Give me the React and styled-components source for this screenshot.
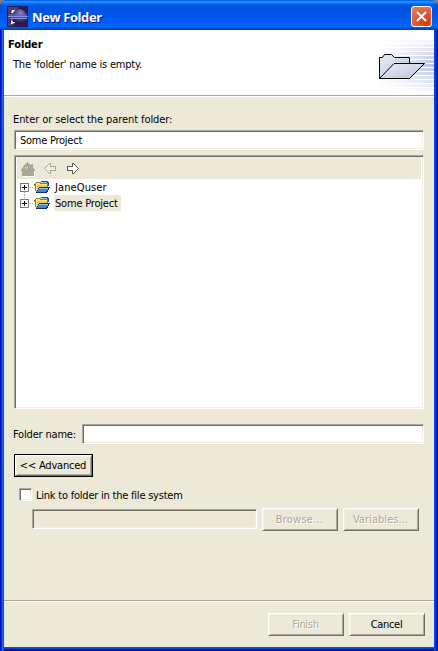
import React from "react";
import styled, { createGlobalStyle, css } from "styled-components";

const face = "#ece9d8";

const GlobalStyle = createGlobalStyle`
  * { box-sizing: border-box; }
  body { margin: 0; background: #808080; }
  svg { display: block; flex: none; }
`;

const Window = styled.div`
  width: 438px;
  height: 651px;
  display: flex;
  flex-direction: column;
  overflow: hidden;
  padding: 0 4px 4px;
  border-radius: 7px 7px 0 0;
  background: linear-gradient(90deg, #0010b8 0 1px, #0831d9 1px 2px, #166aee 2px 3px, #0855dd 3px 4px, transparent 4px 434px, #0048f1 434px 435px, #0036e0 435px 436px, #001ea0 436px 437px, #00138c 437px),
    linear-gradient(#0054e3 0 647px, #0855dd 647px 648px, #0441d8 648px 649px, #001ea0 649px 650px, #00138c 650px);
  font: 11px/13px "DejaVu Sans Condensed", "DejaVu Sans", sans-serif;
  font-stretch: condensed;
  color: #000;
`;

const TitleBar = styled.header`
  height: 30px;
  flex: none;
  display: flex;
  align-items: center;
  margin: 0 -4px;
  padding: 3px 6px 0 7px;
  background: linear-gradient(#0831d9 0, #0997ff 1px, #2a8fff 2px, #0068ee 4px, #0055e5 6px, #0054e3 12px, #005bf5 20px, #0066ff 25px, #0062f8 27px, #0045cc 29px, #0040b8 30px);
`;

const WindowTitle = styled.h1`
  flex: 1;
  margin: 1px 0 0 4px;
  font: bold 13px/18px "Open Sans", sans-serif;
  letter-spacing: ${(p) => p.$spacing}px;
  color: #fff;
  text-shadow: 1px 1px #0a1883;
`;

const CloseButton = styled.button`
  width: 21px;
  height: 21px;
  padding: 0;
  display: grid;
  place-items: center;
  border: 1px solid #fff;
  border-radius: 3px;
  background: radial-gradient(circle at 75% 85%, #d83a08, #e5603c 60%, #e98769);
`;

const Banner = styled.section`
  height: 67px;
  flex: none;
  display: flex;
  justify-content: space-between;
  background: #fff;
  border-bottom: 1px solid #fff;
  box-shadow: inset 0 -1px #aca899;
`;

const BannerText = styled.div`
  padding: 8px 0 0 4px;
`;

const BannerTitle = styled.h2`
  margin: 0;
  font-size: 11px;
  line-height: 13px;
  letter-spacing: ${(p) => p.$spacing}px;
`;

const Text = styled.span`
  white-space: pre;
  letter-spacing: ${(p) => p.$spacing || 0}px;
`;

const Message = styled.p`
  margin: 7px 0 0 5px;
  line-height: 13px;
`;

const Content = styled.main`
  flex: 1;
  padding: 15px 10px 0;
  background: ${face};
`;

const FieldLabel = styled.label`
  display: block;
  height: 18px;
  padding-top: 1px;
  margin-left: -1px;
`;

const sunken = css`
  border: 1px solid;
  border-color: #aca899 #fff #fff #aca899;
  box-shadow: inset 1px 1px #716f64, inset -1px -1px #f1efe2;
`;

const Field = styled.div`
  ${sunken}
  height: 20px;
  width: ${(p) => (p.$width ? `${p.$width}px` : "100%")};
  padding: 3px 5px;
  background: ${(p) => (p.$disabled ? face : "#fff")};
`;

const TreePanel = styled.div`
  ${sunken}
  height: 254px;
  margin-top: 5px;
  padding: 2px 1px 1px;
  background: #fff;
`;

const TreeToolbar = styled.div`
  height: 21px;
  display: flex;
  align-items: center;
  gap: 8px;
  padding-left: 3px;
  margin: 0 1px;
  background: ${face};
  box-shadow: 0 -1px ${face};
`;

const TreeRow = styled.div`
  height: 16px;
  display: flex;
  align-items: center;
  padding-left: 4px;
`;

const TreeLabel = styled.span`
  height: 16px;
  padding: 2px 3px 0 1px;
  margin-left: 4px;
  background: ${(p) => (p.$selected ? face : "transparent")};
`;

const NameRow = styled.div`
  display: flex;
  justify-content: space-between;
  align-items: center;
  margin: 15px 0 0 -1px;
`;

const raised = css`
  border: 1px solid;
  border-color: #fff #716f64 #716f64 #fff;
  box-shadow: inset 1px 1px #f1efe2, inset -1px -1px #aca899;
`;

const Button = styled.button`
  ${raised}
  width: ${(p) => p.$width || 76}px;
  height: 23px;
  padding: 0 1px 1px 0;
  background: ${face};
  font: inherit;
  color: #000;
  &:disabled {
    color: #aca899;
    text-shadow: 1px 1px #fff;
  }
`;

const DefaultFrame = styled.div`
  width: 79px;
  height: 23px;
  margin-top: 10px;
  border: 1px solid #000;
  display: flex;
  ${Button} { height: 21px; }
`;

const CheckRow = styled.label`
  display: flex;
  align-items: center;
  height: 13px;
  gap: 4px;
  margin: 11px 0 0 5px;
  ${Text} { padding-top: 2px; }
`;

const CheckBox = styled.span`
  ${sunken}
  width: 13px;
  height: 13px;
  background: #fff;
`;

const LinkRow = styled.div`
  display: flex;
  gap: 5px;
  align-items: flex-start;
  margin: 7px 0 0 18px;
  ${Field} { margin-top: 1px; }
`;

const Footer = styled.footer`
  height: 47px;
  flex: none;
  display: flex;
  justify-content: flex-end;
  gap: 5px;
  padding: 12px 9px 0 0;
  border-top: 1px solid #aca899;
  box-shadow: inset 0 1px #fff;
  background: ${face};
`;

const EclipseIcon = () => (
  <svg width="21" height="21" viewBox="0 0 21 21">
    <defs>
      <radialGradient id="moon" cx=".6" cy=".28" r=".7">
        <stop offset="0" stopColor="#8f89c4" />
        <stop offset=".45" stopColor="#554c88" />
        <stop offset="1" stopColor="#211748" />
      </radialGradient>
    </defs>
    <path fill="#2b1b55" d="M0 0h21v21H0z" />
    <path fill="#4f3c78" d="M1 1h10v2H6v3H3v11h3v3H1z" />
    <circle cx="12" cy="10.5" r="7.4" fill="url(#moon)" />
    <path fill="#9e90c4" d="M9 2.5C3 5 2 15 8 19L6 16 5 12V8z" />
    <path fill="#f2eefa" d="M5 4h3L6 7H4zM4 14l2 2h2v1H6v1H4z" />
    <path fill="#6a68b8" d="M2 8h18v2H2z" opacity=".6" />
    <path fill="#8f90dc" d="M1 10h20v1H1zM3 12h17v1H3z" />
    <path fill="#4c4785" d="M4 11h16v1H4z" />
  </svg>
);

const stripes = [40, 44, 48, 52, 56, 60, 64, 68, 72, 76, 80, 84, 88];

const FolderBanner = () => (
  <svg width="60" height="64" viewBox="374 30 60 64">
    <defs>
      <linearGradient id="fade" gradientUnits="userSpaceOnUse" x1="378" x2="434" y1="0" y2="0">
        <stop offset="0" stopColor="#b4c0dc" stopOpacity="0" />
        <stop offset="1" stopColor="#b4c0dc" />
      </linearGradient>
      <linearGradient id="paper" x1="0" x2="1" y1="0" y2="1">
        <stop offset="0" stopColor="#e9edf6" />
        <stop offset="1" stopColor="#b9c5dd" />
      </linearGradient>
    </defs>
    {stripes.map((y) => (
      <rect key={y} x="378" y={y} width="56" height="3" fill="url(#fade)" opacity={1 - Math.abs(y - 64) / 29} />
    ))}
    <g fill="url(#paper)" stroke="#000" strokeLinejoin="round">
      <path d="M379.5 78.5v-21h3l2-3h7l3 3h15v6L409 78.5z" />
      <path d="M379.5 78.5l14.5-15h30.5l-15 15z" />
    </g>
  </svg>
);

const HomeIcon = () => (
  <svg width="16" height="16" viewBox="0 0 16 16" shapeRendering="crispEdges">
    <path fill="#fff" d="M14 10h1v6H3v-1h11z" />
    <path fill="#aca899" d="M7 1h1v1h1v1h1v1h1V3h2v4h1v1h1v2h-1v5H2v-5H1V8h1V7h1V5h1V4h1V3h1V2h1z" />
    <path fill="#ece9d8" d="M5 6h1v1H5zM7 6h1v1H7zM6 7h1v1H6z" />
  </svg>
);

const ArrowIcon = ({ enabled }) => (
  <svg width="14" height="12" viewBox="0 0 14 12" shapeRendering="crispEdges">
    <path
      transform={enabled ? undefined : "translate(13 0) scale(-1 1)"}
      d="M1.5 3.5h5v-3l1 0 5 5-5 5h-1v-3h-5z"
      fill={enabled ? "#fff" : "#f1efe2"}
      stroke={enabled ? "#5c5b53" : "#aca899"}
    />
  </svg>
);

const TreeExpander = ({ last }) => (
  <svg width="14" height="16" viewBox="0 0 14 16" shapeRendering="crispEdges">
    <path d={last ? "M4.5 0v3" : "M4.5 13v3"} stroke="#aca899" strokeDasharray="1 1" />
    <path d="M10 8.5h4" stroke="#aca899" strokeDasharray="1 1" />
    <rect x=".5" y="4.5" width="8" height="8" fill="#fff" stroke="#7b7b72" />
    <path d="M2 8.5h5M4.5 6v5" stroke="#000" />
  </svg>
);

const ProjectIcon = () => (
  <svg width="16" height="16" viewBox="0 0 16 16" shapeRendering="crispEdges">
    <path fill="#9a7a1c" d="M0 5h1V4h1V3h5v1h1V3h6v6h-1v4H2v-1H1V7H0z" />
    <path fill="#ffe88a" d="M2 4h4v1h7v3H5v2H4v2H2z" />
    <path fill="#f3c63c" d="M3 6h10v2H5v2H3z" />
    <path fill="#2c4f94" d="M7 2h7v1h1v4h-1V4h-1V3H7z" />
    <path fill="#8ec0ec" d="M8 3h5v1H8z" />
    <path fill="#0b3174" d="M5 8h11v1h-1v2h-1v2h-1v1H2v-1h1v-2h1V9h1z" />
    <path fill="#8fc4f2" d="M5 9h9v1H5z" />
    <path fill="#4288cc" d="M4 10h10v1H4zM4 11h9v1H4zM3 12h9v1H3z" />
  </svg>
);

export default function App() {
  return (
    <>
      <GlobalStyle />
      <Window>
        <TitleBar>
          <EclipseIcon />
          <WindowTitle $spacing={-0.4}>New Folder</WindowTitle>
          <CloseButton aria-label="Close">
            <svg width="13" height="13" viewBox="0 0 13 13">
              <path d="M2 2l9 9M11 2l-9 9" stroke="#fff" strokeWidth="2.1" />
            </svg>
          </CloseButton>
        </TitleBar>
        <Banner>
          <BannerText>
            <BannerTitle $spacing={-0.12}>Folder</BannerTitle>
            <Message><Text $spacing={-0.2}>The 'folder' name is empty.</Text></Message>
          </BannerText>
          <FolderBanner />
        </Banner>
        <Content>
          <FieldLabel><Text $spacing={-0.09}>Enter or select the parent folder:</Text></FieldLabel>
          <Field><Text $spacing={-0.25}>Some Project</Text></Field>
          <TreePanel>
            <TreeToolbar>
              <HomeIcon />
              <ArrowIcon />
              <ArrowIcon enabled />
            </TreeToolbar>
            <TreeRow>
              <TreeExpander />
              <ProjectIcon />
              <TreeLabel><Text $spacing={0.1}>JaneQuser</Text></TreeLabel>
            </TreeRow>
            <TreeRow>
              <TreeExpander last />
              <ProjectIcon />
              <TreeLabel $selected><Text $spacing={-0.2}>Some Project</Text></TreeLabel>
            </TreeRow>
          </TreePanel>
          <NameRow>
            <Text $spacing={-0.18}>Folder name:</Text>
            <Field $width={342} />
          </NameRow>
          <DefaultFrame>
            <Button $width={77}><Text $spacing={-0.2}>&lt;&lt; Advanced</Text></Button>
          </DefaultFrame>
          <CheckRow>
            <CheckBox />
            <Text $spacing={-0.22}>Link to folder in the file system</Text>
          </CheckRow>
          <LinkRow>
            <Field $width={225} $disabled />
            <Button disabled><Text $spacing={0.25}>Browse...</Text></Button>
            <Button disabled><Text $spacing={0.05}>Variables...</Text></Button>
          </LinkRow>
        </Content>
        <Footer>
          <Button disabled><Text $spacing={-0.3}>Finish</Text></Button>
          <Button><Text $spacing={-0.3}>Cancel</Text></Button>
        </Footer>
      </Window>
    </>
  );
}
